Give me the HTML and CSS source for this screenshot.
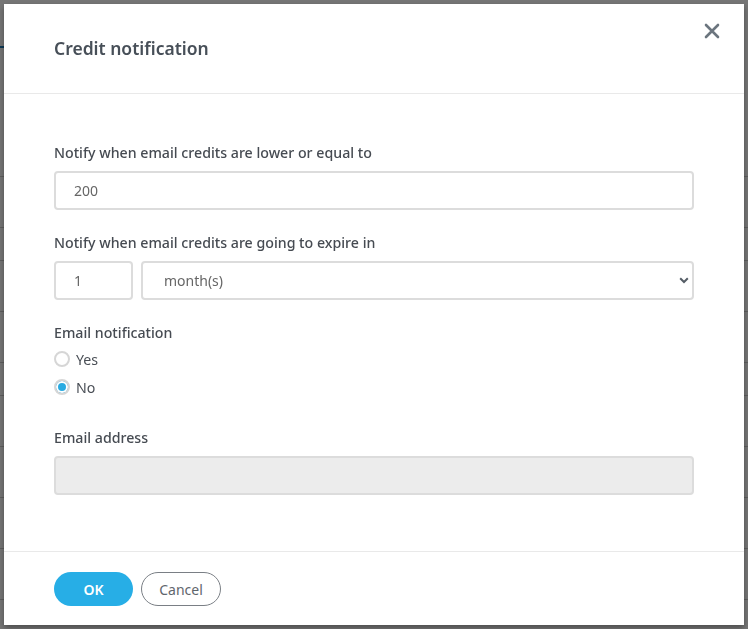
FILE: index.html
```html
<!DOCTYPE html>
<html>
<head>
  <title>Credit notification</title>
  <link rel="stylesheet" href="styles.css">
</head>
<body>
  <div class="page">
    <div class="page-tab"></div>
    <div class="page-row"></div>
    <div class="page-row"></div>
    <div class="page-row short"></div>
    <div class="page-row"></div>
    <div class="page-row"></div>
    <div class="page-row short"></div>
    <div class="page-row"></div>
    <div class="page-row"></div>
    <div class="page-row"></div>
    <div class="page-row"></div>
  </div>
  <div class="backdrop"></div>

  <div class="modal">
    <div class="modal-header">
      <h2 class="modal-title">Credit notification</h2>
      <button class="modal-close" type="button" aria-label="Close">
        <svg width="16" height="16" viewBox="0 0 16 16">
          <path d="M2 2 L14 14 M14 2 L2 14" stroke="#6b757e" stroke-width="2.6" stroke-linecap="round" fill="none"/>
        </svg>
      </button>
    </div>

    <form class="modal-body">
      <label class="field-label" for="lowerInput">Notify when email credits are lower or equal to</label>
      <input class="field-input" type="text" id="lowerInput" value="200">

      <label class="field-label" for="expireInput">Notify when email credits are going to expire in</label>
      <div class="expire-row">
        <input class="field-input small" type="text" id="expireInput" value="1">
        <div class="select-wrap">
          <select class="field-input select">
            <option>month(s)</option>
            <option>week(s)</option>
            <option>day(s)</option>
          </select>
          <svg class="select-arrow" width="10" height="7" viewBox="0 0 10 7">
            <path d="M1.2 1.3 L5 5 L8.8 1.3" stroke="#555d66" stroke-width="2" fill="none"/>
          </svg>
        </div>
      </div>

      <div class="field-label">Email notification</div>
      <label class="radio-line"><input type="radio" name="notify" value="yes"> Yes</label>
      <label class="radio-line"><input type="radio" name="notify" value="no" checked> No</label>

      <label class="field-label spaced" for="emailInput">Email address</label>
      <input class="field-input" type="text" id="emailInput" disabled>
    </form>

    <div class="modal-footer">
      <button class="btn btn-primary" type="button">OK</button>
      <button class="btn btn-outline" type="button">Cancel</button>
    </div>
  </div>
</body>
</html>
```

FILE: styles.css
```css
body {
  margin: 0;
  font-family: "Noto Sans", "Open Sans", Arial, sans-serif;
  background-color: #fff;
  overflow: hidden;
}

.page {
  width: 748px;
  height: 629px;
  padding-top: 46px;
  box-sizing: border-box;
}

.page-tab {
  border-bottom: 2px solid #1a7bb8;
  width: 40px;
  margin-bottom: 78px;
}

.page-row {
  height: 50px;
  border-bottom: 1px solid #ccc;
}

.page-row.short {
  height: 32px;
}

.backdrop {
  position: fixed;
  inset: 0;
  background-color: rgba(0, 0, 0, 0.54);
}

.modal {
  position: fixed;
  left: 4px;
  top: 4px;
  width: 740px;
  height: 621px;
  background-color: #fff;
  box-shadow: 0 3px 6px rgba(0, 0, 0, 0.35);
  display: flex;
  flex-direction: column;
}

.modal-header {
  height: 89px;
  border-bottom: 1px solid #e9e9e9;
  padding: 0 24px 0 50px;
  display: flex;
  align-items: flex-start;
  justify-content: space-between;
}

.modal-title {
  margin: 31px 0 0 0;
  font-size: 17.5px;
  line-height: 26px;
  font-weight: 600;
  color: #474f58;
}

.modal-close {
  border: none;
  background: none;
  padding: 0;
  margin-top: 19px;
  cursor: pointer;
}

.modal-body {
  flex: 1;
  padding: 49px 50px 0 50px;
  display: flex;
  flex-direction: column;
  align-items: flex-start;
}

.field-label {
  display: block;
  font-size: 14.2px;
  line-height: 20px;
  font-weight: 500;
  color: #464b52;
  margin-bottom: 8px;
}

.field-label.spaced {
  margin-top: 21px;
}

.field-input {
  box-sizing: border-box;
  width: 640px;
  height: 39px;
  border: 2px solid #dcdcdc;
  border-radius: 4px;
  padding: 0 18px;
  font-family: inherit;
  font-size: 14px;
  color: #666;
  background-color: #fff;
  margin: 0 0 23px 0;
  outline: none;
}

.field-input:disabled {
  background-color: #ececec;
}

.expire-row {
  display: flex;
  gap: 8px;
  width: 640px;
}

.field-input.small {
  width: 79px;
}

.select-wrap {
  position: relative;
  flex: 1;
}

.field-input.select {
  width: 100%;
  appearance: none;
  -webkit-appearance: none;
  padding-left: 21px;
}

.select-arrow {
  position: absolute;
  right: 5px;
  top: 16px;
}

.radio-line {
  display: flex;
  align-items: center;
  gap: 6px;
  height: 28px;
  font-size: 14.2px;
  color: #4a4f56;
  margin-top: -6px;
  margin-bottom: 6px;
}

.radio-line input {
  appearance: none;
  -webkit-appearance: none;
  width: 16px;
  height: 16px;
  margin: 0;
  border: 2px solid #d6d6d6;
  border-radius: 50%;
  background-color: #fff;
  box-sizing: border-box;
}

.radio-line input:checked {
  background-color: #29abe2;
  box-shadow: inset 0 0 0 2px #fff;
}

.modal-footer {
  height: 74px;
  border-top: 1px solid #e9e9e9;
  padding: 20px 50px 0 50px;
  box-sizing: border-box;
  display: flex;
  align-items: flex-start;
  gap: 8px;
}

.btn {
  width: 80px;
  height: 34px;
  border-radius: 17px;
  font-family: inherit;
  font-size: 14px;
  cursor: pointer;
}

.btn-primary {
  width: 79px;
  background-color: #27aee6;
  border: none;
  color: #fff;
  font-weight: 600;
}

.btn-outline {
  background-color: #fff;
  border: 1px solid #7a7f85;
  color: #5f666d;
}
```
